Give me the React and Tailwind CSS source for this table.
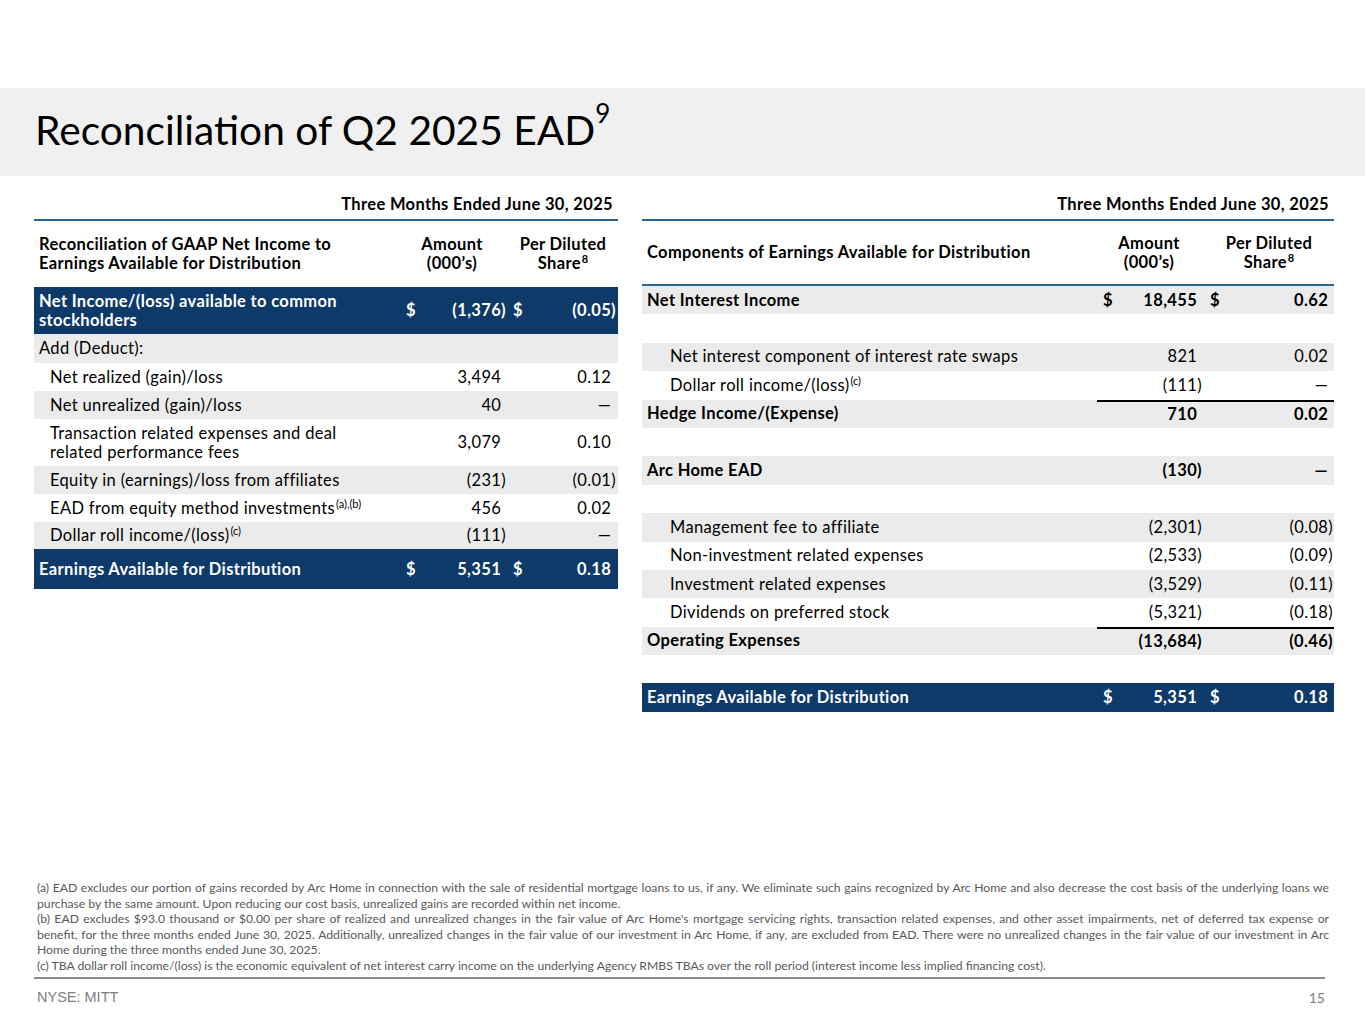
import React from "react";

const FONT = { fontFamily: "Lato, 'Open Sans', sans-serif" };

function Num({ v }) {
  if (!v) return null;
  const hang = !v.endsWith(")");
  return (
    <span>
      {v}
      {hang ? <span className="invisible">)</span> : null}
    </span>
  );
}

const leftRows = [
  { label: ["Net Income/(loss) available to common", "stockholders"], d: true, amt: "(1,376)", ps: "(0.05)", kind: "navy", h: "h-[47px]" },
  { label: ["Add (Deduct):"], kind: "gray", h: "h-[29px]" },
  { label: ["Net realized (gain)/loss"], amt: "3,494", ps: "0.12", indent: true, h: "h-[28px]" },
  { label: ["Net unrealized (gain)/loss"], amt: "40", ps: "—", indent: true, kind: "gray", h: "h-[28px]" },
  { label: ["Transaction related expenses and deal", "related performance fees"], amt: "3,079", ps: "0.10", indent: true, h: "h-[47px]" },
  { label: ["Equity in (earnings)/loss from affiliates"], amt: "(231)", ps: "(0.01)", indent: true, kind: "gray", h: "h-[28px]" },
  { label: ["EAD from equity method investments"], sup: "(a),(b)", amt: "456", ps: "0.02", indent: true, h: "h-[28px]" },
  { label: ["Dollar roll income/(loss)"], sup: "(c)", amt: "(111)", ps: "—", indent: true, kind: "gray", h: "h-[27px]" },
  { label: ["Earnings Available for Distribution"], d: true, amt: "5,351", ps: "0.18", kind: "navy", h: "h-[40px]" },
];

const rightRows = [
  { label: "Net Interest Income", d: true, amt: "18,455", ps: "0.62", kind: "gray", bold: true },
  { blank: true },
  { label: "Net interest component of interest rate swaps", amt: "821", ps: "0.02", indent: true, kind: "gray" },
  { label: "Dollar roll income/(loss)", sup: "(c)", amt: "(111)", ps: "—", indent: true },
  { label: "Hedge Income/(Expense)", amt: "710", ps: "0.02", kind: "gray", bold: true, rule: true },
  { blank: true },
  { label: "Arc Home EAD", amt: "(130)", ps: "—", kind: "gray", bold: true },
  { blank: true },
  { label: "Management fee to affiliate", amt: "(2,301)", ps: "(0.08)", indent: true, kind: "gray" },
  { label: "Non-investment related expenses", amt: "(2,533)", ps: "(0.09)", indent: true },
  { label: "Investment related expenses", amt: "(3,529)", ps: "(0.11)", indent: true, kind: "gray" },
  { label: "Dividends on preferred stock", amt: "(5,321)", ps: "(0.18)", indent: true },
  { label: "Operating Expenses", amt: "(13,684)", ps: "(0.46)", kind: "gray", bold: true, rule: true },
  { blank: true },
  { label: "Earnings Available for Distribution", d: true, amt: "5,351", ps: "0.18", kind: "navy" },
];

function rowTone(kind) {
  if (kind === "navy") return "bg-[#0e3a69] text-white font-bold";
  if (kind === "gray") return "bg-[#ebebeb] text-black";
  return "bg-white text-black";
}

function Sup({ children }) {
  return (
    <span className="inline-block text-[11px] leading-[10px] tracking-normal align-top ml-[1px]">
      {children}
    </span>
  );
}

const BODY = "text-[16.5px] tracking-[0.35px] leading-[19px]";

function LeftTable() {
  return (
    <div className="w-[584px]">
      <div className={`text-right font-bold pr-[5px] pt-[18px] pb-[5px] ${BODY} leading-[20px]`}>
        Three Months Ended June 30, 2025
      </div>
      <div className="h-[2px] bg-[#2a6496]" />
      <div className={`flex h-[66px] pt-[14px] font-bold ${BODY}`}>
        <div className="w-[366px] pl-[5px]">
          Reconciliation of GAAP Net Income to
          <br />
          Earnings Available for Distribution
        </div>
        <div className="w-[20px]" />
        <div className="w-[64px] text-center whitespace-nowrap">
          Amount
          <br />
          (000’s)
        </div>
        <div className="w-[35px]" />
        <div className="w-[88px] text-center whitespace-nowrap">
          Per Diluted
          <br />
          Share<Sup>8</Sup>
        </div>
      </div>
      {leftRows.map((r, i) => (
        <div key={i} className={`flex items-center ${BODY} ${r.h} ${rowTone(r.kind)}`}>
          <div className={`w-[366px] whitespace-nowrap ${r.indent ? "pl-[16px]" : "pl-[5px]"}`}>
            {r.label.map((l, j) => (
              <div key={j}>
                {l}
                {r.sup && j === r.label.length - 1 ? <Sup>{r.sup}</Sup> : null}
              </div>
            ))}
          </div>
          <div className="w-[20px] pl-[6px]">{r.d ? "$" : ""}</div>
          <div className="w-[87px] text-right pr-[1px]">
            <Num v={r.amt} />
          </div>
          <div className="w-[18px] pl-[6px]">{r.d ? "$" : ""}</div>
          <div className="w-[93px] text-right pr-[2px]">
            <Num v={r.ps} />
          </div>
        </div>
      ))}
    </div>
  );
}

function RightTable() {
  return (
    <div className="w-[692px]">
      <div className={`text-right font-bold pr-[5px] pt-[18px] pb-[5px] ${BODY} leading-[20px]`}>
        Three Months Ended June 30, 2025
      </div>
      <div className="h-[2px] bg-[#2a6496]" />
      <div className={`flex items-center h-[63px] font-bold ${BODY}`}>
        <div className="w-[455px] pl-[5px] whitespace-nowrap">Components of Earnings Available for Distribution</div>
        <div className="w-[12px]" />
        <div className="w-[80px] text-center whitespace-nowrap">
          Amount
          <br />
          (000’s)
        </div>
        <div className="w-[30px]" />
        <div className="w-[100px] text-center whitespace-nowrap">
          Per Diluted
          <br />
          Share<Sup>8</Sup>
        </div>
      </div>
      <div className="h-[2px] bg-[#2a6496]" />
      {rightRows.map((r, i) =>
        r.blank ? (
          <div key={i} className="h-[28.4px]" />
        ) : (
          <div
            key={i}
            className={`flex items-stretch h-[28.4px] ${BODY} ${rowTone(r.kind)} ${r.bold ? "font-bold" : ""}`}
          >
            <div className={`w-[455px] flex items-center whitespace-nowrap ${r.indent ? "pl-[28px]" : "pl-[5px]"}`}>
              <span>
                {r.label}
                {r.sup ? <Sup>{r.sup}</Sup> : null}
              </span>
            </div>
            <div className={`flex items-center w-[237px] ${r.rule ? "border-t-2 border-black" : ""}`}>
              <div className="w-[23px] pl-[6px]">{r.d ? "$" : ""}</div>
              <div className="w-[83px] text-right pr-[1px]">
                <Num v={r.amt} />
              </div>
              <div className="w-[22px] pl-[7px]">{r.d ? "$" : ""}</div>
              <div className="w-[109px] text-right pr-[1px]">
                <Num v={r.ps} />
              </div>
            </div>
          </div>
        )
      )}
    </div>
  );
}

const notes = [
  { t: "(a) EAD excludes our portion of gains recorded by Arc Home in connection with the sale of residential mortgage loans to us, if any. We eliminate such gains recognized by Arc Home and also decrease the cost basis of the underlying loans we", j: true },
  { t: "purchase by the same amount. Upon reducing our cost basis, unrealized gains are recorded within net income." },
  { t: "(b) EAD excludes $93.0 thousand or $0.00 per share of realized and unrealized changes in the fair value of Arc Home's mortgage servicing rights, transaction related expenses, and other asset impairments, net of deferred tax expense or", j: true },
  { t: "benefit, for the three months ended June 30, 2025. Additionally, unrealized changes in the fair value of our investment in Arc Home, if any, are excluded from EAD. There were no unrealized changes in the fair value of our investment in Arc", j: true },
  { t: "Home during the three months ended June 30, 2025." },
  { t: "(c) TBA dollar roll income/(loss) is the economic equivalent of net interest carry income on the underlying Agency RMBS TBAs over the roll period (interest income less implied financing cost)." },
];

export default function App() {
  return (
    <div className="w-[1365px] h-[1024px] bg-white text-black flex flex-col overflow-hidden" style={FONT}>
      <div className="h-[88px] shrink-0" />
      <div className="h-[88px] shrink-0 bg-[#f0f0f0] pl-[35px] pt-[16px]">
        <h1 className="text-[40.7px] leading-[52px] font-normal text-black">
          Reconciliation of Q2 2025 EAD
          <span className="inline-block text-[26px] leading-[26px] align-top -mt-[4px]">9</span>
        </h1>
      </div>
      <div className="h-[704px] shrink-0 flex pl-[34px] gap-[24px]">
        <LeftTable />
        <RightTable />
      </div>
      <div className="pl-[37px] w-[1329px] text-[12.2px] leading-[15.6px] text-[#595959]">
        {notes.map((n, i) => (
          <div key={i} className={`whitespace-nowrap ${n.j ? "text-justify [text-align-last:justify]" : ""}`}>
            {n.t}
          </div>
        ))}
      </div>
      <div className="ml-[34px] w-[1291px] h-[2px] bg-[#8a8a8a] mt-[3px]" />
      <div className="flex justify-between items-center ml-[37px] w-[1288px] pt-[8px]">
        <span className="text-[14.5px] text-[#7f7f7f]" style={{ fontFamily: "'Liberation Sans', Arial, sans-serif" }}>
          NYSE: MITT
        </span>
        <span className="text-[14px] text-[#7f7f7f]">15</span>
      </div>
    </div>
  );
}
